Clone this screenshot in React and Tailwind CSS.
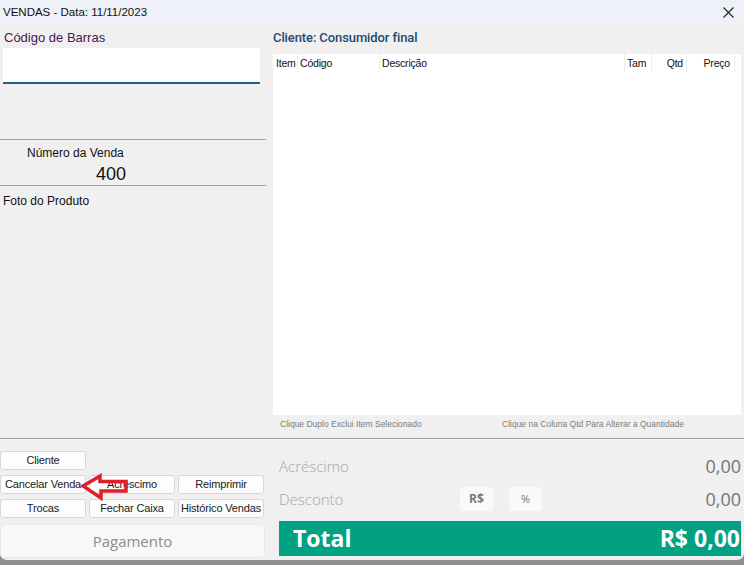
import React from "react";

const btn =
  "h-[19px] w-[86px] bg-[#fdfdfd] border border-[#d6d6d6] rounded-[3px] text-[11px] tracking-[-0.15px] whitespace-nowrap text-[#1a1a1a] flex items-center justify-center leading-none";

export default function App() {
  return (
    <div className="w-[744px] h-[565px] bg-[#8f8f8f] overflow-hidden" style={{ fontFamily: '"Liberation Sans", Arial, sans-serif' }}>
      <div className="h-[560px] bg-[#f0f0f0] rounded-b-[7px] flex flex-col overflow-hidden">
        {/* Title bar */}
        <div className="h-[26px] bg-[#eef2f8] flex items-center justify-between pl-[3px] pr-[10px] shrink-0">
          <span className="text-[11.5px] text-[#111]">VENDAS - Data: 11/11/2023</span>
          <svg width="11" height="11" viewBox="0 0 11 11" className="mb-[2px]">
            <path d="M0.5 0.5 L10.5 10.5 M10.5 0.5 L0.5 10.5" stroke="#222" strokeWidth="1.1" />
          </svg>
        </div>

        {/* Top section */}
        <div className="h-[412px] flex shrink-0">
          {/* Left */}
          <div className="w-[266px] flex flex-col shrink-0">
            <div className="mt-[4px] pl-[4px] text-[13px] leading-[16px] text-[#4a1650]">Código de Barras</div>
            <div className="mt-[2px] ml-[3px] w-[257px] h-[36px] bg-white border-b-2 border-[#1f5f8d]" />
            <div className="mt-[55px] h-px bg-[#a3a3a3]" />
            <div className="mt-[6px] pl-[27px] text-[12px] leading-[14px] text-[#111]">Número da Venda</div>
            <div className="mt-[4px] pl-[96px] text-[18px] leading-[20px] text-[#111]">400</div>
            <div className="mt-[1px] h-px bg-[#a3a3a3]" />
            <div className="mt-[8px] pl-[3px] text-[12px] leading-[14px] text-[#111]">Foto do Produto</div>
          </div>

          {/* Right */}
          <div className="flex-1 flex flex-col pl-[7px] pr-[3px]">
            <div
              className="mt-[4px] text-[13px] leading-[16px] font-medium text-[#1e4a74] tracking-[-0.1px]"
              style={{ fontFamily: 'Roboto, sans-serif' }}
            >
              Cliente: Consumidor final
            </div>
            <div className="mt-[8px] h-[361px] bg-white">
              <div className="flex h-[18px] text-[10.5px] tracking-[-0.2px] text-[#111] leading-[18px] whitespace-nowrap">
                <div className="w-[25px] pl-[3px] border-r border-[#ececec] overflow-hidden">Item</div>
                <div className="w-[82px] pl-[2px] border-r border-[#ececec]">Código</div>
                <div className="w-[245px] pl-[2px] border-r border-[#ececec]">Descrição</div>
                <div className="w-[27px] pl-[2px] border-r border-[#ececec]">Tam</div>
                <div className="w-[35px] pr-[3px] text-right border-r border-[#ececec]">Qtd</div>
                <div className="w-[48px] pr-[4px] text-right border-r border-[#ececec]">Preço</div>
              </div>
            </div>
            <div className="flex mt-[3px] text-[8.5px] text-[#7d7d7d] leading-[12px]">
              <span className="pl-[7px] w-[229px]">Clique Duplo Exclui Item Selecionado</span>
              <span>Clique na Coluna Qtd Para Alterar a Quantidade</span>
            </div>
          </div>
        </div>

        <div className="h-px bg-[#9c9c9c] shrink-0" />
        <div className="h-px bg-[#fafafa] shrink-0" />

        {/* Bottom section */}
        <div className="flex flex-1 pt-[11px]">
          <div className="w-[266px] flex flex-col gap-[5px] shrink-0 relative">
            <div className="flex">
              <div className={btn}>Cliente</div>
            </div>
            <div className="flex gap-[3px]">
              <div className={btn}>Cancelar Venda</div>
              <div className={btn}>Acréscimo</div>
              <div className={btn}>Reimprimir</div>
            </div>
            <div className="flex gap-[3px]">
              <div className={btn}>Trocas</div>
              <div className={btn}>Fechar Caixa</div>
              <div className={btn}>Histórico Vendas</div>
            </div>
            <div
              className="mt-[1px] w-[265px] h-[34px] bg-[#f8f8f8] border border-[#e8e8e8] rounded-[4px] flex items-center justify-center text-[15px] text-[#8c8c8c]"
              style={{ fontFamily: '"Open Sans", sans-serif' }}
            >
              Pagamento
            </div>
            {/* Red arrow annotation */}
            <svg className="absolute left-[80px] top-[22px]" width="50" height="28" viewBox="0 0 50 28">
              <polygon
                points="3,13 20,3 20,8.5 46,8.5 46,18 21,18 21,25"
                fill="none"
                stroke="#e01f2a"
                strokeWidth="3.5"
                strokeLinejoin="miter"
              />
            </svg>
          </div>

          <div className="flex-1 flex flex-col pl-[13px] pr-[3px]" style={{ fontFamily: '"Open Sans", sans-serif' }}>
            <div className="h-[30px] flex items-center justify-between">
              <span className="text-[15px] text-[#a6a6a6] font-light">Acréscimo</span>
              <span className="text-[18px] text-[#747474]">0,00</span>
            </div>
            <div className="h-[36px] flex items-center">
              <span className="text-[15px] text-[#a6a6a6] font-light w-[181px]">Desconto</span>
              <div className="w-[33px] h-[24px] bg-[#f9f9f9] rounded-[3px] flex items-center justify-center text-[12px] font-bold text-[#7a7a7a]">R$</div>
              <div className="ml-[16px] w-[33px] h-[24px] bg-[#f9f9f9] rounded-[3px] flex items-center justify-center text-[11px] text-[#7a7a7a]">%</div>
              <span className="ml-auto text-[18px] text-[#747474]">0,00</span>
            </div>
            <div className="mt-[4px] h-[35px] bg-[#01a182] flex items-center justify-between pl-[14px] pr-[1px] text-white text-[23px] font-bold">
              <span>Total</span>
              <span>R$ 0,00</span>
            </div>
          </div>
        </div>
      </div>
    </div>
  );
}
